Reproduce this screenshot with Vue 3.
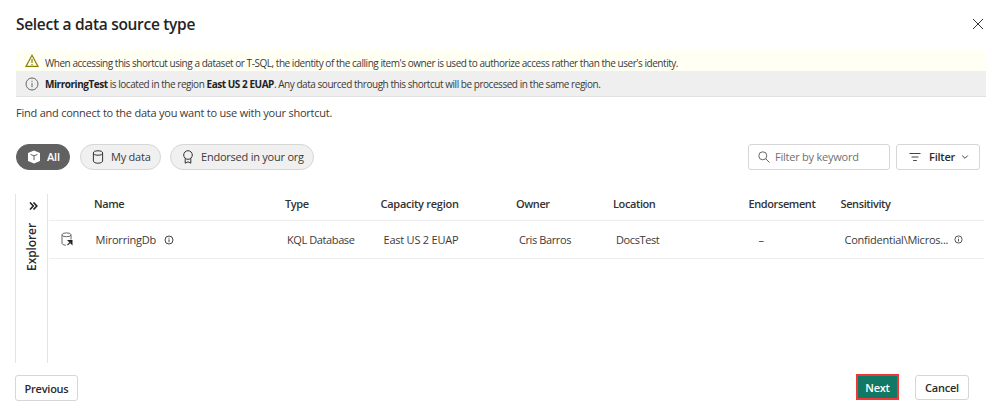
<script setup>
const columns = [
  { key: 'name', label: 'Name' },
  { key: 'type', label: 'Type' },
  { key: 'region', label: 'Capacity region' },
  { key: 'owner', label: 'Owner' },
  { key: 'location', label: 'Location' },
  { key: 'endorsement', label: 'Endorsement' },
  { key: 'sensitivity', label: 'Sensitivity' },
]
const rows = [
  {
    name: 'MirorringDb',
    type: 'KQL Database',
    region: 'East US 2 EUAP',
    owner: 'Cris Barros',
    location: 'DocsTest',
    endorsement: '–',
    sensitivity: 'Confidential\\Micros...',
  },
]
</script>

<template>
  <main class="dialog">
    <header class="top">
      <h1>Select a data source type</h1>
      <svg class="close" viewBox="0 0 12 12"><path d="M1 1l10 10M11 1L1 11" /></svg>
    </header>

    <div class="banner warn">
      <svg class="b-icon warn-icon" viewBox="0 0 14 14"><path d="M7 1.3L13 12.400H1z" /><path d="M7 5v4M7 10v1.200" /></svg>
      <span class="warn-text">When accessing this shortcut using a dataset or T-SQL, the identity of the calling item's owner is used to authorize access rather than the user's identity.</span>
    </div>
    <div class="banner info">
      <svg class="b-icon" viewBox="0 0 14 14"><circle cx="7" cy="7" r="6" /><path d="M7 6v4.200M7 3.800v1.100" /></svg>
      <span class="info-text"><b>MirroringTest</b> is located in the region <b>East US 2 EUAP</b>. Any data sourced through this shortcut will be processed in the same region.</span>
    </div>

    <p class="intro">Find and connect to the data you want to use with your shortcut.</p>

    <div class="toolbar">
      <button class="pill all">
        <svg class="cube" viewBox="0 0 14 14"><path class="solid" d="M7 .5l6 2.400v8.200l-6 2.400-6-2.400V2.900z" /><path class="cut" d="M3.600 4.400L7 5.900l3.400-1.500M7 5.900v4.200" /></svg>
        <span>All</span>
      </button>
      <button class="pill mine">
        <svg class="cyl" viewBox="0 0 12 14"><ellipse cx="6" cy="3" rx="4.600" ry="2.200" /><path d="M1.400 3v8c0 1.200 2 2.200 4.600 2.200s4.600-1 4.600-2.200V3" /></svg>
        <span>My data</span>
      </button>
      <button class="pill endorsed">
        <svg class="medal" viewBox="0 0 12 14"><circle cx="6" cy="5" r="4.300" /><path d="M3.200 8.500v4.700L6 11.800l2.800 1.400V8.500" /></svg>
        <span>Endorsed in your org</span>
      </button>
      <div class="search">
        <svg class="lens" viewBox="0 0 12 12"><circle cx="4.800" cy="4.800" r="4" /><path d="M7.800 7.800l3.700 3.700" /></svg>
        <span>Filter by keyword</span>
      </div>
      <button class="box filter">
        <svg class="lines" viewBox="0 0 12 10"><path d="M.5 1.500h11M2.500 5h7M4.200 8.500h3.600" /></svg>
        <span>Filter</span>
        <svg class="chev" viewBox="0 0 8 6"><path d="M1.200 1.500L4 4.300l2.800-2.800" /></svg>
      </button>
    </div>

    <section class="content">
      <aside class="explorer">
        <svg class="expand" viewBox="0 0 9 8"><path d="M1 .5L4.300 4 1 7.500M4.500 .5L7.800 4 4.500 7.500" /></svg>
        <span>Explorer</span>
      </aside>
      <div class="table">
        <div class="row head">
          <span></span>
          <span v-for="c in columns" :key="c.key" :class="'h-' + c.key">{{ c.label }}</span>
        </div>
        <div v-for="r in rows" :key="r.name" class="row body">
          <svg class="db" viewBox="0 0 13 15">
            <ellipse cx="5.500" cy="2.800" rx="4.500" ry="1.900" />
            <path d="M1 2.800v8.400c0 1.100 1.500 1.900 4 2M10 2.800v4.700" />
            <path class="arrow" d="M6 8h5.500v5.500z" />
            <path class="stem" d="M9.500 10L6.500 13" />
          </svg>
          <div v-for="c in columns" :key="c.key" class="cell" :class="'c-' + c.key">
            <span>{{ r[c.key] }}</span>
            <svg v-if="c.key === 'name' || c.key === 'sensitivity'" class="i" viewBox="0 0 10 10"><circle cx="5" cy="5" r="4" /><path d="M5 4.400v2.800M5 2.700v.9" /></svg>
          </div>
        </div>
      </div>
    </section>

    <footer class="actions">
      <button class="box prev">Previous</button>
      <button class="next">Next</button>
      <button class="box cancel">Cancel</button>
    </footer>
  </main>
</template>

<style>
body {
  background: #fff;
}
</style>

<style scoped>
* {
  box-sizing: border-box;
}
.dialog {
  width: 996px;
  height: 408px;
  overflow: hidden;
  font-family: "Open Sans", "Noto Sans", sans-serif;
  font-size: 11px;
  letter-spacing: -0.230px;
  color: #3b3a39;
  white-space: nowrap;
}
svg {
  fill: none;
  stroke: #444;
  stroke-width: 1;
  flex: none;
  display: block;
}
button {
  font: inherit;
  letter-spacing: inherit;
  color: inherit;
  padding: 0;
}
.top {
  height: 50px;
  padding: 0 12px 2px 16px;
  display: flex;
  align-items: center;
  justify-content: space-between;
}
h1 {
  margin: 0;
  font-size: 15.500px;
  line-height: 24px;
  font-weight: 600;
  letter-spacing: -0.300px;
  color: #242424;
}
.close {
  width: 12px;
  height: 12px;
  stroke: #333;
}
.banner {
  margin: 0 10px 0 16px;
  padding-left: 9px;
  display: flex;
  align-items: center;
  gap: 6px;
  font-size: 10px;
}
.warn {
  height: 21px;
  background: #fffff3;
}
.warn-text {
  padding-top: 4px;
  letter-spacing: -0.460px;
}
.info {
  height: 26px;
  background: #efefef;
  border-bottom: 1px solid #e1e1e1;
}
.info-text {
  letter-spacing: -0.460px;
}
.info-text b {
  color: #222;
}
.b-icon {
  width: 14px;
  height: 14px;
  stroke: #666;
}
.warn-icon {
  stroke: #8b8000;
  stroke-width: 1.200;
}
.intro {
  margin: 0;
  padding: 6px 0 0 16px;
  height: 47px;
  line-height: 20px;
}
.toolbar {
  display: flex;
  height: 26px;
  padding-left: 16px;
}
.pill {
  height: 26px;
  border: 1px solid #d6d6d6;
  border-radius: 13px;
  background: #f0f0f0;
  display: flex;
  align-items: center;
  padding-left: 11px;
}
.toolbar span {
  padding-bottom: 1px;
}
.all {
  width: 54px;
  padding-left: 10px;
  background: #616161;
  border-color: #616161;
  color: #fff;
  font-weight: 600;
  gap: 6px;
}
.mine {
  width: 81px;
  margin-left: 10px;
  gap: 7px;
}
.endorsed {
  width: 144px;
  margin-left: 9px;
  gap: 7px;
}
.cube {
  width: 14px;
  height: 14px;
}
.solid {
  fill: #fff;
  stroke: none;
}
.cut {
  stroke: #616161;
}
.cyl,
.medal {
  width: 12px;
  height: 14px;
  stroke: #333;
}
.search {
  width: 142px;
  margin-left: 434px;
  border: 1px solid #d6d6d6;
  border-radius: 3px;
  display: flex;
  align-items: center;
  padding-left: 9px;
  gap: 5px;
  color: #707070;
}
.lens {
  width: 12px;
  height: 12px;
  stroke: #666;
}
.box {
  height: 26px;
  background: #fff;
  border: 1px solid #d6d6d6;
  border-radius: 3px;
  font-weight: 600;
  color: #2b2b2b;
}
.filter {
  width: 84px;
  margin-left: 6px;
  display: flex;
  align-items: center;
  padding-left: 12px;
}
.lines {
  width: 12px;
  height: 10px;
  margin-right: 8px;
}
.chev {
  width: 8px;
  height: 6px;
  margin-left: 6px;
}
.content {
  display: flex;
  height: 169px;
  margin: 24px 12px 0 15px;
}
.explorer {
  width: 33px;
  border-left: 1px solid #e3e3e3;
  border-right: 1px solid #e3e3e3;
  display: flex;
  flex-direction: column;
  align-items: center;
  padding: 8px 0 0 4px;
  font-size: 12px;
  font-weight: 600;
  letter-spacing: -0.100px;
  color: #2b2b2b;
}
.expand {
  width: 9px;
  height: 8px;
  stroke: #222;
  stroke-width: 1.600;
  margin-bottom: 13px;
}
.explorer span {
  writing-mode: vertical-rl;
  transform: rotate(180deg);
  line-height: 16px;
  margin-right: 4px;
}
.table {
  flex: 1;
  margin-left: 1px;
}
.row {
  display: grid;
  grid-template-columns: 45px 191px 95.500px 135.500px 97px 135.500px 92px 1fr;
  align-items: center;
  border-bottom: 1px solid #ededed;
}
.head {
  height: 27px;
  padding-bottom: 8px;
  font-weight: 600;
  letter-spacing: -0.400px;
  color: #333;
}
.h-region {
  letter-spacing: -0.270px;
}
.body {
  height: 38px;
}
.db {
  width: 13px;
  height: 15px;
  margin-left: 11.500px;
  stroke: #666;
}
.arrow {
  fill: #222;
  stroke: none;
}
.stem {
  stroke: #444;
  stroke-width: 1.200;
}
.cell {
  display: flex;
  align-items: center;
  gap: 8px;
  padding-left: 3px;
}
.c-name {
  padding-left: 1.500px;
}
.c-type {
  padding-left: 2px;
}
.c-type,
.c-owner,
.c-location {
  letter-spacing: -0.400px;
}
.c-endorsement {
  padding-left: 10px;
}
.c-sensitivity {
  padding-left: 4px;
  gap: 6px;
  letter-spacing: -0.240px;
}
.i {
  width: 10px;
  height: 10px;
}
.c-sensitivity .i {
  width: 9px;
  height: 9px;
}
.actions {
  display: flex;
  padding: 11px 0 0 15px;
  align-items: flex-start;
}
.prev {
  width: 63px;
  margin-top: 1px;
}
.next {
  width: 43px;
  height: 26px;
  margin-left: 778px;
  background: #117865;
  border: 2px solid #ef3737;
  color: #fff;
  font-weight: 600;
}
.cancel {
  width: 54px;
  height: 25px;
  margin-left: 16px;
  margin-top: 1px;
}
</style>
